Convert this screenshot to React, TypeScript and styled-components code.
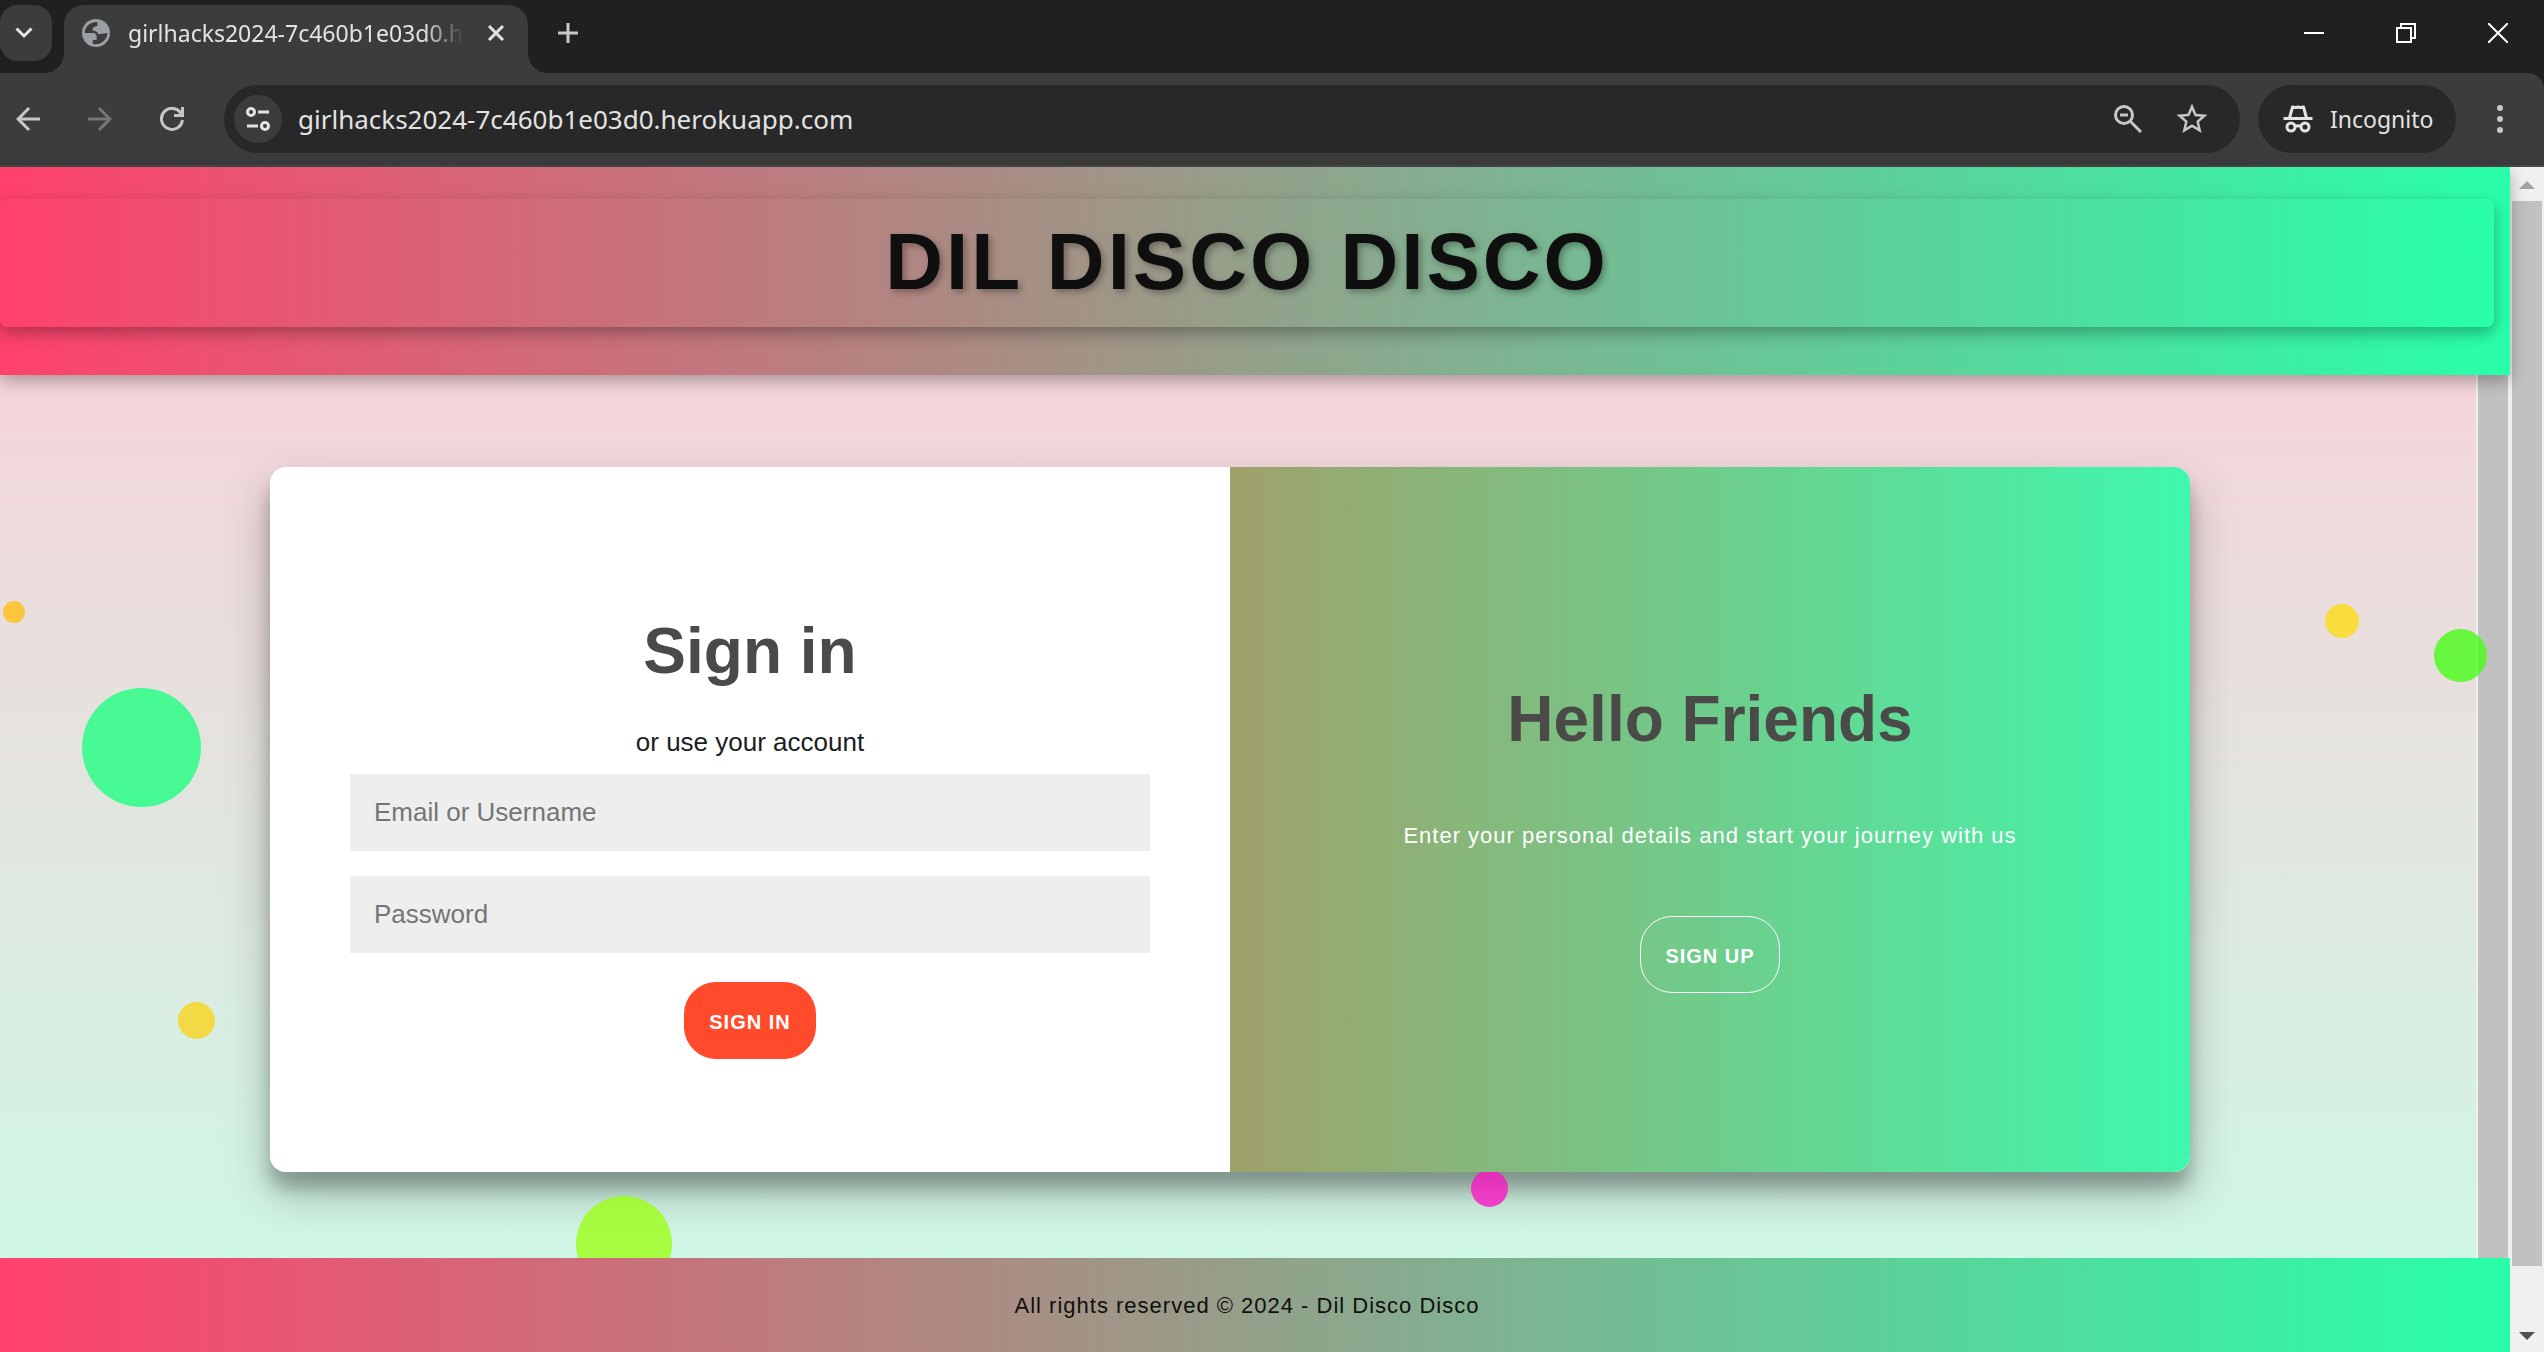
import React from "react";
import styled, { createGlobalStyle } from "styled-components";

const GlobalStyle = createGlobalStyle`
  *, *::before, *::after { box-sizing: border-box; }
  html, body { margin: 0; padding: 0; }
  body { overflow: hidden; font-family: "Liberation Sans", Arial, sans-serif; }
  button, input { font-family: inherit; }
`;

const sunset = "linear-gradient(to right, #ff416c, #28ffa9)";

const Window = styled.div`
  height: 100vh;
  display: flex;
  flex-direction: column;
  background: #1f2120;
`;

/* ---------- browser frame ---------- */

const TabStrip = styled.div`
  height: 73px;
  flex: none;
  display: flex;
  align-items: flex-start;
  padding-top: 5px;
  background: #1f2120;
`;

const IconButton = styled.button<{ $tone?: string }>`
  width: 56px;
  height: 56px;
  flex: none;
  display: grid;
  place-items: center;
  padding: 0;
  border: 0;
  background: transparent;
  color: ${(p) => p.$tone ?? "#c7c7c7"};
`;

const TabSearch = styled(IconButton)`
  width: 52px;
  padding-right: 4px;
  border-radius: 18px;
  background: #3c3c3c;
  color: #e3e3e3;
`;

const Tab = styled.div`
  position: relative;
  width: 464px;
  height: 68px;
  flex: none;
  display: flex;
  align-items: center;
  margin-left: 12px;
  padding: 0 14px 12px 18px;
  border-radius: 20px 20px 0 0;
  background: #3c3c3c;

  &::before,
  &::after {
    content: "";
    position: absolute;
    bottom: 0;
    width: 20px;
    height: 20px;
  }
  &::before {
    right: 100%;
    background: radial-gradient(circle at 0 0, transparent 20px, #3c3c3c 20px);
  }
  &::after {
    left: 100%;
    background: radial-gradient(circle at 100% 0, transparent 20px, #3c3c3c 20px);
  }
`;

const TabTitle = styled.span`
  flex: 1;
  min-width: 0;
  margin-left: 18px;
  overflow: hidden;
  white-space: nowrap;
  font: 23px/32px "Noto Sans", "Open Sans", sans-serif;
  color: #e3e3e3;
  mask-image: linear-gradient(to right, #000 calc(100% - 40px), transparent);
`;

const TabClose = styled(IconButton)`
  width: 36px;
  height: 36px;
  margin-left: 14px;
  color: #e3e3e3;
`;

const NewTab = styled(IconButton)`
  margin-left: 12px;
`;

const WindowControls = styled.div`
  margin-left: auto;
  display: flex;
`;

const WindowControl = styled(IconButton)`
  width: 92px;
  color: #fff;
`;

const Toolbar = styled.div`
  height: 94px;
  flex: none;
  display: flex;
  align-items: center;
  padding-right: 16px;
  border-bottom: 2px solid #484848;
  border-radius: 0 16px 0 0;
  background: #3c3c3c;
`;

const NavButtons = styled.div`
  display: flex;
  gap: 16px;
  margin-right: 24px;
`;

const Omnibox = styled.div`
  flex: 1;
  height: 68px;
  display: flex;
  align-items: center;
  padding: 0 20px 0 10px;
  border-radius: 34px;
  background: #282828;
`;

const SiteInfo = styled(IconButton)`
  width: 48px;
  height: 48px;
  border-radius: 50%;
  background: #3c3c3c;
  color: #e3e3e3;
`;

const Address = styled.input`
  flex: 1;
  min-width: 0;
  margin-left: 16px;
  padding: 0;
  border: 0;
  outline: 0;
  background: transparent;
  font: 26px/40px "Noto Sans", "Open Sans", sans-serif;
  color: #e3e3e3;
`;

const OmniActions = styled.div`
  display: flex;
  gap: 8px;
`;

const Incognito = styled.button`
  width: 198px;
  height: 68px;
  flex: none;
  display: flex;
  align-items: center;
  gap: 16px;
  margin: 0 16px 0 18px;
  padding: 0 0 0 24px;
  border: 0;
  border-radius: 34px;
  background: #282828;
  color: #e3e3e3;

  span {
    font: 23px/32px "Noto Sans", "Open Sans", sans-serif;
  }
`;

/* ---------- page ---------- */

const Viewport = styled.div`
  flex: 1;
  min-height: 0;
  display: flex;
`;

const Page = styled.div`
  flex: 1;
  min-width: 0;
  display: flex;
  flex-direction: column;
`;

const Header = styled.header`
  position: relative;
  z-index: 2;
  flex: none;
  padding: 32px 16px 48px 0;
  background: ${sunset};
  box-shadow: 0 6px 16px rgba(0, 0, 0, 0.3);
`;

const Title = styled.h1`
  margin: 0;
  padding: 17px 0 19px;
  border-radius: 8px;
  background: ${sunset};
  box-shadow: 0 6px 16px rgba(0, 0, 0, 0.3);
  font-size: 80px;
  line-height: 92px;
  letter-spacing: 3px;
  text-align: center;
  text-transform: uppercase;
  text-shadow: 3px 3px 6px rgba(0, 0, 0, 0.3);
  color: #0f0f0f;
`;

const Scroller = styled.div`
  flex: 1;
  min-height: 0;
  position: relative;
  display: flex;
  overflow: hidden;
`;

const Main = styled.main`
  flex: 1;
  min-width: 0;
  padding: 92px 286px 86px 270px;
  background: linear-gradient(to bottom, #f4d4da, #cff7e5);
`;

const Bubble = styled.span<{ $x: string; $y: number; $size: number; $color: string }>`
  position: absolute;
  left: ${(p) => p.$x};
  top: ${(p) => p.$y}px;
  width: ${(p) => p.$size}px;
  height: ${(p) => p.$size}px;
  border-radius: 50%;
  background: ${(p) => p.$color};
  opacity: 0.8;
`;

const Card = styled.div`
  position: relative;
  z-index: 1;
  height: 100%;
  display: grid;
  grid-template-columns: 1fr 1fr;
  overflow: hidden;
  border-radius: 16px;
  background: #fff;
`;

const CardShadow = styled.div`
  height: 100%;
  border-radius: 16px;
  box-shadow: 0 22px 45px rgba(0, 0, 0, 0.25), 0 16px 16px rgba(0, 0, 0, 0.22);
`;

const Panel = styled.div`
  display: flex;
  flex-direction: column;
  align-items: center;
  justify-content: center;
  padding: 0 80px;
`;

const FormPanel = styled(Panel).attrs({ as: "form" })`
  padding-bottom: 2px;
`;

const WelcomePanel = styled(Panel)`
  background: linear-gradient(to right, #9fa16a, #3ff8ad);
  color: #fff;
`;

const Heading = styled.h2`
  margin: 36px 0 38px;
  font-size: 64px;
  line-height: 74px;
  color: #4a4a48;
`;

const Hint = styled.span`
  margin-bottom: 16px;
  font-size: 26px;
  line-height: 32px;
  color: #1b1e21;
`;

const Field = styled.input`
  width: 100%;
  height: 77px;
  margin-bottom: 25px;
  padding: 0 24px;
  border: 0;
  border-radius: 0;
  background: #eee;
  font-size: 26px;

  &::placeholder {
    color: #757575;
    opacity: 1;
  }
`;

const Pill = styled.button<{ $ghost?: boolean }>`
  height: 77px;
  margin-top: 4px;
  padding: 4px 24px 0;
  border: 1px solid ${(p) => (p.$ghost ? "#fff" : "#ff4b2b")};
  border-radius: 32px;
  background: ${(p) => (p.$ghost ? "transparent" : "#ff4b2b")};
  font-size: 20px;
  font-weight: 700;
  letter-spacing: 1px;
  text-transform: uppercase;
  color: #fff;
`;

const Welcome = styled.p`
  margin: 26px 0 60px;
  font-size: 22px;
  line-height: 32px;
  letter-spacing: 1px;
`;

const Footer = styled.footer`
  position: relative;
  z-index: 2;
  height: 94px;
  flex: none;
  padding: 32px 16px 0 0;
  background: ${sunset};
  font-size: 22px;
  line-height: 32px;
  letter-spacing: 1px;
  text-align: center;
  color: #0f0f0f;
`;

/* ---------- scrollbars ---------- */

const Track = styled.div`
  width: 34px;
  flex: none;
  display: flex;
  flex-direction: column;
  padding: 0 2px;
  background: #f0f0f0;
`;

const Arrow = styled.svg`
  display: block;
  width: 30px;
  height: 34px;
  flex: none;
`;

const Thumb = styled.div<{ $rest?: number }>`
  flex: 1;
  margin-bottom: ${(p) => p.$rest ?? 0}px;
  background: #c1c1c1;
`;

const bubbles = [
  { x: "3px", y: 226, size: 22, color: "#ffbf17" },
  { x: "82px", y: 313, size: 119, color: "#1fff7f" },
  { x: "178px", y: 627, size: 37, color: "#f9d31b" },
  { x: "calc(100% - 185px)", y: 229, size: 34, color: "#fddb17" },
  { x: "calc(100% - 76px)", y: 254, size: 53, color: "#47fd17" },
  { x: "1471px", y: 795, size: 37, color: "#f917c3" },
  { x: "576px", y: 821, size: 96, color: "#9cff17" },
];

const stroke = { fill: "none", stroke: "currentColor" } as const;

export default function App() {
  return (
    <Window>
      <GlobalStyle />
      <TabStrip>
        <TabSearch aria-label="Search tabs">
          <svg width="18" height="12" viewBox="0 0 18 12" {...stroke} strokeWidth="3">
            <path d="M1.500 1.500 9 9l7.500-7.500" />
          </svg>
        </TabSearch>
        <Tab>
          <svg width="28" height="28" viewBox="0 0 84 84">
            <circle cx="42" cy="42" r="42" fill="#9aa0a6" />
            <path
              fill="#3c3c3c"
              d="M8 42A34 34 0 0 1 46 9v11l-14 6v8l12 4 6 8 26-4A34 34 0 0 1 32 74V64l12-2V50l-6-8z"
            />
          </svg>
          <TabTitle>girlhacks2024-7c460b1e03d0.herokuapp.com</TabTitle>
          <TabClose aria-label="Close tab">
            <svg width="18" height="18" viewBox="0 0 18 18" {...stroke} strokeWidth="3">
              <path d="M2 2l14 14M16 2 2 16" />
            </svg>
          </TabClose>
        </Tab>
        <NewTab aria-label="New tab">
          <svg width="20" height="20" viewBox="0 0 20 20" {...stroke} strokeWidth="3">
            <path d="M10 0v20M0 10h20" />
          </svg>
        </NewTab>
        <WindowControls>
          <WindowControl aria-label="Minimize">
            <svg width="20" height="20" viewBox="0 0 20 20" {...stroke} strokeWidth="2">
              <path d="M0 10h20" />
            </svg>
          </WindowControl>
          <WindowControl aria-label="Restore">
            <svg width="20" height="20" viewBox="0 0 20 20" {...stroke} strokeWidth="2">
              <path d="M1 5h14v14H1zM5 5V1h14v14h-4" />
            </svg>
          </WindowControl>
          <WindowControl aria-label="Close">
            <svg width="20" height="20" viewBox="0 0 20 20" {...stroke} strokeWidth="2">
              <path d="M0 0l20 20M20 0 0 20" />
            </svg>
          </WindowControl>
        </WindowControls>
      </TabStrip>

      <Toolbar>
        <NavButtons>
          <IconButton aria-label="Back">
            <svg width="24" height="24" viewBox="4 4 16 16" fill="currentColor">
              <path d="M20 11H7.830l5.590-5.590L12 4l-8 8 8 8 1.410-1.410L7.830 13H20v-2z" />
            </svg>
          </IconButton>
          <IconButton $tone="#757575" aria-label="Forward">
            <svg width="24" height="24" viewBox="4 4 16 16" fill="currentColor">
              <path d="M12 4l-1.410 1.410L16.170 11H4v2h12.170l-5.580 5.590L12 20l8-8z" />
            </svg>
          </IconButton>
          <IconButton aria-label="Reload">
            <svg width="24" height="24" viewBox="0 0 24 24" {...stroke} strokeWidth="3">
              <path d="M22.400 13A10.500 10.500 0 1 1 21 6.500" />
              <path d="M22.500 0v8.500H14" />
            </svg>
          </IconButton>
        </NavButtons>
        <Omnibox>
          <SiteInfo aria-label="View site information">
            <svg width="24" height="24" viewBox="0 0 24 24" {...stroke} strokeWidth="3">
              <circle cx="5" cy="5" r="3.500" />
              <path d="M12 5h11M1 19h11" />
              <circle cx="19" cy="19" r="3.500" />
            </svg>
          </SiteInfo>
          <Address aria-label="Address" defaultValue="girlhacks2024-7c460b1e03d0.herokuapp.com" />
          <OmniActions>
            <IconButton aria-label="Zoom out">
              <svg width="28" height="28" viewBox="0 0 28 28" {...stroke} strokeWidth="3">
                <circle cx="10" cy="10" r="8.500" />
                <path d="M6 10h8M16 16l11 11" />
              </svg>
            </IconButton>
            <IconButton aria-label="Bookmark this tab">
              <svg width="34" height="34" viewBox="1 1 22 22" fill="currentColor">
                <path d="M22 9.240l-7.190-.620L12 2 9.190 8.630 2 9.240l5.460 4.730L5.820 21 12 17.270 18.180 21l-1.630-7.030L22 9.240zM12 15.400l-3.760 2.270 1-4.280-3.320-2.880 4.380-.380L12 6.100l1.710 4.040 4.380.380-3.320 2.880 1 4.280L12 15.400z" />
              </svg>
            </IconButton>
          </OmniActions>
        </Omnibox>
        <Incognito>
          <svg width="32" height="30" viewBox="0 0 32 30" {...stroke} strokeWidth="3">
            <path d="M1.500 14.500h29" />
            <path d="M7.500 14 10.500 3q3 1 5.500 0 2.500 1 5.500 0l3 11" strokeLinejoin="round" />
            <circle cx="9" cy="23" r="4" />
            <circle cx="23" cy="23" r="4" />
            <path d="M13 22.500q3-1.500 6 0" />
          </svg>
          <span>Incognito</span>
        </Incognito>
        <IconButton aria-label="Menu">
          <svg width="6" height="28" viewBox="0 0 6 28" fill="currentColor">
            <circle cx="3" cy="3" r="3" />
            <circle cx="3" cy="14" r="3" />
            <circle cx="3" cy="25" r="3" />
          </svg>
        </IconButton>
      </Toolbar>

      <Viewport>
        <Page>
          <Header>
            <Title>Dil Disco Disco</Title>
          </Header>
          <Scroller>
            <Main>
              <CardShadow>
                <Card>
                  <FormPanel>
                    <Heading>Sign in</Heading>
                    <Hint>or use your account</Hint>
                    <Field type="text" placeholder="Email or Username" aria-label="Email or Username" />
                    <Field type="password" placeholder="Password" aria-label="Password" />
                    <Pill type="button">Sign in</Pill>
                  </FormPanel>
                  <WelcomePanel>
                    <Heading>Hello Friends</Heading>
                    <Welcome>Enter your personal details and start your journey with us</Welcome>
                    <Pill type="button" $ghost>Sign up</Pill>
                  </WelcomePanel>
                </Card>
              </CardShadow>
            </Main>
            <Track>
              <Thumb />
            </Track>
            {bubbles.map((b) => (
              <Bubble key={b.x} $x={b.x} $y={b.y} $size={b.size} $color={b.color} />
            ))}
          </Scroller>
          <Footer>All rights reserved © 2024 - Dil Disco Disco</Footer>
        </Page>
        <Track>
          <Arrow viewBox="0 0 30 34">
            <path d="M7 22l8-8 8 8z" fill="#a3a3a3" />
          </Arrow>
          <Thumb $rest={52} />
          <Arrow viewBox="0 0 30 34">
            <path d="M7 14l8 8 8-8z" fill="#505050" />
          </Arrow>
        </Track>
      </Viewport>
    </Window>
  );
}
